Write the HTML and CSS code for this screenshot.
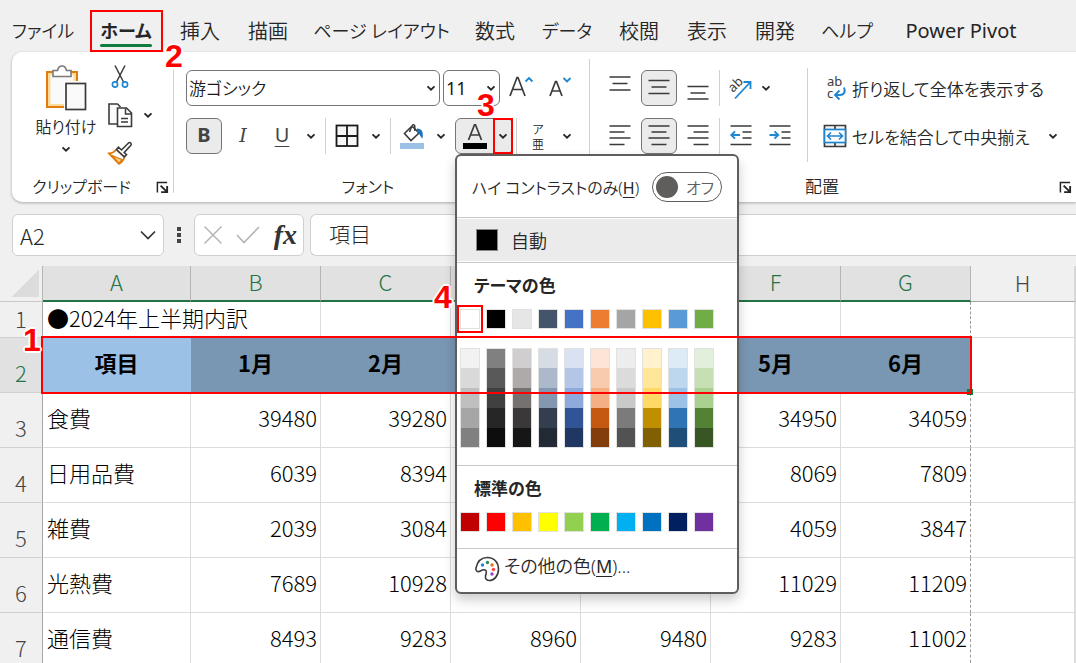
FILE: index.html
```html
<!DOCTYPE html>
<html lang="ja">
<head>
<meta charset="utf-8">
<meta name="viewport" content="width=device-width, initial-scale=1">
<title>2024年上半期内訳</title>
<link rel="stylesheet" href="styles.css">
</head>
<body>
<svg class="defs" aria-hidden="true">
  <symbol id="chev" viewBox="0 0 10 10"><path d="M1.5 3.3 5 6.7 8.5 3.3" fill="none" stroke="#262626" stroke-width="1.8"/></symbol>
  <symbol id="launch" viewBox="0 0 14 14"><path d="M1.5 12.5V1.5H12" fill="none" stroke="#262626" stroke-width="1.6"/><path d="M5 5l6 6M12 5.500v6.500H5.500" fill="none" stroke="#262626" stroke-width="2"/></symbol>
</svg>

<nav class="tabs" aria-label="リボン">
  <button class="kana">ファイル</button>
  <button class="kana active">ホーム</button>
  <button>挿入</button>
  <button>描画</button>
  <button class="kana">ページ レイアウト</button>
  <button>数式</button>
  <button class="kana">データ</button>
  <button>校閲</button>
  <button>表示</button>
  <button>開発</button>
  <button class="kana">ヘルプ</button>
  <button class="latin">Power Pivot</button>
</nav>

<div class="ribbon">
  <section class="group clipboard">
    <div class="group-body">
      <button class="paste">
        <svg width="42" height="46" viewBox="0 0 42 46" fill="none">
          <rect x="2" y="7" width="30" height="35" fill="#fbdc9b" stroke="#e07b0c" stroke-width="2"/>
          <rect x="5.500" y="10" width="23" height="29" fill="#fafafa"/>
          <path d="M8 11.500V5.500h4.500C13 2.500 15 1 17 1s4 1.500 4.500 4.500H26v6z" fill="#fff" stroke="#7a7a7a" stroke-width="1.6"/>
          <rect x="19" y="16" width="23" height="30" fill="#fff"/>
          <rect x="21" y="18.500" width="19.500" height="26" fill="#fafafa" stroke="#3b3b3b" stroke-width="1.7"/>
        </svg>
        <span>貼り付け</span>
        <svg class="chev"><use href="#chev"/></svg>
      </button>
      <div class="clip-tools">
        <button class="icon" aria-label="切り取り"><svg width="18" height="26" viewBox="0 0 18 26" fill="none"><path d="M4 1.500l8.500 16.500M14 1.500L5.500 18" stroke="#3b3b3b" stroke-width="1.5"/><circle cx="4" cy="20.500" r="2.600" stroke="#1f87d2" stroke-width="1.6"/><circle cx="14" cy="20.500" r="2.600" stroke="#1f87d2" stroke-width="1.6"/></svg></button>
        <button class="icon" aria-label="コピー"><svg width="26" height="26" viewBox="0 0 26 26" fill="none"><path d="M10 22H2V2h8.500l3 3" fill="#fafafa" stroke="#3b3b3b" stroke-width="1.6"/><path d="M10.500 6h9l5 5v13.500h-14z" fill="#fff" stroke="#3b3b3b" stroke-width="1.6"/><path d="M18.500 6.500V12h6M14 16.500h7M14 20h7" stroke="#3b3b3b" stroke-width="1.5"/></svg></button>
        <button class="icon" aria-label="書式のコピー"><svg width="26" height="26" viewBox="0 0 26 26" fill="none"><path d="M9.500 9.500C7 12.500 4.500 13.300 2 13.500l10 10.300c3-1.600 4.800-4 5.500-7z" fill="#fff" stroke="#e07b0c" stroke-width="1.8"/><path d="M5 15.500l10 4-3 4z" fill="#fbcf80" stroke="#e07b0c" stroke-width="1.300"/><path d="M9.500 9.500l2-2.300 3 2.800 7-7c1.800-1.300 3.500.5 2.400 2.200l-6.700 7.300 2.300 2.300-2.300 2z" fill="#fff" stroke="#3b3b3b" stroke-width="1.6"/></svg></button>
      </div>
      <button class="drop" aria-label="コピーのオプション"><svg class="chev"><use href="#chev"/></svg></button>
    </div>
    <footer><span>クリップボード</span><button class="launcher" aria-label="クリップボードの設定"><svg width="13" height="13"><use href="#launch"/></svg></button></footer>
  </section>
  <i class="rule"></i>

  <section class="group font">
    <div class="group-body rows">
      <div class="row">
        <label class="combo family"><select aria-label="フォント"><option>游ゴシック</option></select><svg class="chev"><use href="#chev"/></svg></label>
        <label class="combo size"><select aria-label="フォント サイズ"><option>11</option></select><svg class="chev"><use href="#chev"/></svg></label>
        <button class="tool" aria-label="フォント サイズの拡大"><svg width="26" height="26" viewBox="0 0 26 26" fill="none"><path d="M2 21L9 2.500h1L17 21M4.500 14.500h10" stroke="#3b3b3b" stroke-width="1.7"/><path d="M17.500 6.500L21 3l3.500 3.500" stroke="#1f87d2" stroke-width="1.8"/></svg></button>
        <button class="tool" aria-label="フォント サイズの縮小"><svg width="26" height="26" viewBox="0 0 26 26" fill="none"><path d="M3 21L8.500 6.500h1L15 21M5 16h8" stroke="#3b3b3b" stroke-width="1.7"/><path d="M16.500 3L20 6.500 23.500 3" stroke="#1f87d2" stroke-width="1.8"/></svg></button>
      </div>
      <div class="row">
        <button class="tool on bold">B</button>
        <button class="tool italic">I</button>
        <button class="tool under">U</button>
        <button class="drop" aria-label="下線の種類"><svg class="chev"><use href="#chev"/></svg></button>
        <i class="bar"></i>
        <button class="tool" aria-label="罫線"><svg width="24" height="24" viewBox="0 0 24 24" fill="none" stroke="#1a1a1a" stroke-width="1.800"><rect x="1.500" y="1.500" width="21" height="20.500" fill="#f7f7f7"/><path d="M12 2v20M2 12h20"/></svg></button>
        <button class="drop" aria-label="罫線の種類"><svg class="chev"><use href="#chev"/></svg></button>
        <i class="bar"></i>
        <button class="tool" aria-label="塗りつぶしの色"><svg width="26" height="26" viewBox="0 0 26 26" fill="none"><path d="M12 4L5.500 10.500 12 17.500l8-7.500-6-6z" fill="#fff" stroke="#3b3b3b" stroke-width="1.6"/><path d="M10.500 9L13 2.800c.6-1.600 2.800-1.200 2.800.5V8" stroke="#3b3b3b" stroke-width="1.5"/><path d="M18 5.500c5 0 6.500 3.500 5.500 10-2.500-1.500-2.500-5.500-5.500-6z" fill="#1770c0"/><rect x="1" y="20" width="24" height="6" fill="#9bc2e6"/></svg></button>
        <button class="drop" aria-label="塗りつぶしの色の選択"><svg class="chev"><use href="#chev"/></svg></button>
        <div class="split">
          <button aria-label="フォントの色"><svg width="26" height="26" viewBox="0 0 26 26" fill="none"><path d="M6.500 17L12.500 1.800h1L19.500 17M8.500 12h9" stroke="#3b3b3b" stroke-width="1.7"/><rect x="1" y="20" width="24" height="6" fill="#000"/></svg></button>
          <button class="marked" aria-label="フォントの色の選択"><svg class="chev"><use href="#chev"/></svg></button>
        </div>
        <i class="bar"></i>
        <button class="tool ruby"><span>ア</span><span>亜</span></button>
        <button class="drop" aria-label="ふりがなの設定"><svg class="chev"><use href="#chev"/></svg></button>
      </div>
    </div>
    <footer><span>フォント</span></footer>
  </section>
  <i class="rule tall"></i>

  <section class="group align">
    <div class="group-body">
      <div class="rows">
        <div class="row">
          <button class="tool" aria-label="上揃え"><svg class="lines" viewBox="0 0 24 24"><path d="M1.500 1h21M4.500 7.500h15M1.500 14h21"/></svg></button>
          <button class="tool on" aria-label="上下中央揃え"><svg class="lines" viewBox="0 0 24 24"><path d="M1.500 4.500h21M4.500 11h15M1.500 17.500h21"/></svg></button>
          <button class="tool" aria-label="下揃え"><svg class="lines" viewBox="0 0 24 24"><path d="M1.500 10.500h21M4.500 17h15M1.500 23h21"/></svg></button>
          <i class="bar"></i>
          <button class="tool slim" aria-label="方向"><svg width="26" height="26" viewBox="0 0 26 26" fill="none"><text class="glyph" transform="translate(7 18) rotate(-45)">ab</text><path d="M9 23.500L24 7.500M17.500 7h7v7" stroke="#1f87d2" stroke-width="1.800"/></svg></button>
          <button class="drop" aria-label="方向の選択"><svg class="chev"><use href="#chev"/></svg></button>
        </div>
        <div class="row">
          <button class="tool" aria-label="左揃え"><svg class="lines" viewBox="0 0 24 24"><path d="M1.500 2h21M1.500 8h15M1.500 14h21M1.500 20.500h15"/></svg></button>
          <button class="tool on" aria-label="中央揃え"><svg class="lines" viewBox="0 0 24 24"><path d="M1.500 2h21M4.500 8h15M1.500 14h21M4.500 20.500h15"/></svg></button>
          <button class="tool" aria-label="右揃え"><svg class="lines" viewBox="0 0 24 24"><path d="M1.500 2h21M7.500 8h15M1.500 14h21M7.500 20.500h15"/></svg></button>
          <i class="bar"></i>
          <button class="tool" aria-label="インデントを減らす"><svg class="lines" viewBox="0 0 24 24"><path d="M1.500 2h21M13.500 8h9M13.500 14h9M1.500 20.500h21"/><path class="blue" d="M11 11H2.500M6 7.300L2.300 11 6 14.700"/></svg></button>
          <button class="tool" aria-label="インデントを増やす"><svg class="lines" viewBox="0 0 24 24"><path d="M1.500 2h21M13.500 8h9M13.500 14h9M1.500 20.500h21"/><path class="blue" d="M1.500 11H10M6.500 7.300l3.700 3.700-3.700 3.700"/></svg></button>
        </div>
      </div>
      <i class="rule inner"></i>
      <div class="rows wide">
        <button class="row text-tool"><svg width="24" height="26" viewBox="0 0 24 26" fill="none"><text class="glyph" x="4" y="11">ab</text><text class="glyph" x="4" y="23">c</text><path d="M21 12.500c2 5-.5 7.500-4 7.500h-4.500M16.500 15.500L12 20l4.500 4.500" stroke="#1f87d2" stroke-width="1.900"/></svg><span>折り返して全体を表示する</span></button>
        <div class="row">
          <button class="text-tool"><svg width="24" height="24" viewBox="0 0 24 24" fill="none"><path d="M1.500 1.500h21v21h-21zM12 1v4M12 19v4" fill="#f4f4f4" stroke="#3b3b3b" stroke-width="1.700"/><rect x="1.500" y="5.500" width="21" height="13" fill="#fff" stroke="#1f87d2" stroke-width="1.700"/><path d="M4.500 12h15M8 8.500L4.500 12 8 15.500M16 8.500l3.500 3.500-3.500 3.500" stroke="#1f87d2" stroke-width="1.700"/></svg><span>セルを結合して中央揃え</span></button>
          <button class="drop" aria-label="結合の種類"><svg class="chev"><use href="#chev"/></svg></button>
        </div>
      </div>
    </div>
    <footer><span>配置</span><button class="launcher" aria-label="配置の設定"><svg width="13" height="13"><use href="#launch"/></svg></button></footer>
  </section>
</div>

<div class="formula-bar">
  <label class="name-box"><input type="text" value="A2" aria-label="名前ボックス"><svg width="16" height="10" viewBox="0 0 16 10" fill="none"><path d="M1 1.500l7 7 7-7" stroke="#333" stroke-width="1.700"/></svg></label>
  <svg class="dots" width="4" height="18" viewBox="0 0 4 18" fill="#444"><path d="M0 1h4v4H0zM0 7h4v4H0zM0 13h4v4H0z"/></svg>
  <div class="entry">
    <button aria-label="キャンセル"><svg width="20" height="20" viewBox="0 0 20 20"><path d="M1.500 1.500l17 17M18.500 1.500l-17 17" stroke="#b4b4b4" stroke-width="1.500"/></svg></button>
    <button aria-label="入力"><svg width="24" height="20" viewBox="0 0 24 20" fill="none"><path d="M1 10l7 7.500L23 2" stroke="#b4b4b4" stroke-width="1.600"/></svg></button>
    <button class="fx">fx</button>
  </div>
  <input class="formula" type="text" value="項目" aria-label="数式バー">
</div>

<main class="sheet">
  <table>
    <colgroup><col class="c-head"><col class="c-first"><col class="c-num" span="6"><col class="c-blank"><col></colgroup>
    <thead>
      <tr><th class="corner"></th><th>A</th><th>B</th><th>C</th><th></th><th></th><th>F</th><th>G</th><th class="plain">H</th><th class="plain"></th></tr>
    </thead>
    <tbody>
      <tr class="title"><th>1</th><td colspan="2">●2024年上半期内訳</td><td></td><td></td><td></td><td></td><td class="page-end"></td><td></td><td></td></tr>
      <tr class="heads"><th>2</th><td class="first">項目</td><td>1月</td><td>2月</td><td></td><td></td><td>5月</td><td>6月</td><td class="free"></td><td class="free"></td></tr>
      <tr><th>3</th><td>食費</td><td>39480</td><td>39280</td><td></td><td></td><td>34950</td><td class="page-end">34059</td><td></td><td></td></tr>
      <tr><th>4</th><td>日用品費</td><td>6039</td><td>8394</td><td></td><td></td><td>8069</td><td class="page-end">7809</td><td></td><td></td></tr>
      <tr><th>5</th><td>雑費</td><td>2039</td><td>3084</td><td></td><td></td><td>4059</td><td class="page-end">3847</td><td></td><td></td></tr>
      <tr><th>6</th><td>光熱費</td><td>7689</td><td>10928</td><td></td><td></td><td>11029</td><td class="page-end">11209</td><td></td><td></td></tr>
      <tr><th>7</th><td>通信費</td><td>8493</td><td>9283</td><td>8960</td><td>9480</td><td>9283</td><td class="page-end">11002</td><td></td><td></td></tr>
    </tbody>
  </table>
</main>

<div class="color-menu">
  <label class="contrast"><span>ハイ コントラストのみ(<u>H</u>)</span><span class="switch"><input type="checkbox" role="switch"><span>オフ</span></span></label>
  <button class="auto"><i></i>自動</button>
  <section class="theme">
    <h2>テーマの色</h2>
    <div class="swatches" id="theme"></div>
    <div class="shades" id="shades"></div>
  </section>
  <section class="standard">
    <h2>標準の色</h2>
    <div class="swatches" id="standard"></div>
  </section>
  <button class="more"><svg width="26" height="26" viewBox="0 0 26 26" fill="none"><path d="M2 12C3.500 5 8 1.500 13.500 1.500 20 1.500 24.500 6.500 24.500 13c0 7-4.500 11.500-9 11.500-3 0-4.500-2-4-4.500.6-2.700 1.700-4.500.3-5.700-1.500-1.200-3.300-.5-5.500.7C3.500 16.500 1.300 15 2 12z" fill="#fff" stroke="#3b3b3b" stroke-width="1.600"/><circle cx="8.500" cy="9" r="1.700" fill="#1f87d2"/><circle cx="13.500" cy="6.500" r="1.700" fill="#2e8b57"/><circle cx="18" cy="9" r="1.700" fill="#e8730c"/><circle cx="19.500" cy="13.500" r="1.700" fill="#f44"/><circle cx="18" cy="18" r="1.700" fill="#a23fc4"/></svg><span>その他の色(<u>M</u>)...</span></button>
</div>

<div class="marks">
  <i class="frame frame-tab"></i><b class="num num-tab">2</b>
  <b class="num num-drop">3</b>
  <i class="frame frame-swatch"></i><b class="num num-swatch">4</b>
  <i class="handle"></i><i class="frame frame-row"></i><b class="num num-row">1</b>
</div>
<script src="script.js"></script>
</body>
</html>
```
FILE: styles.css
```css
* { box-sizing: border-box; }

body {
  position: relative;
  margin: 0;
  height: 100vh;
  overflow: hidden;
  background: #f0f0f0;
  color: #262626;
  font-family: "Noto Sans", "Noto Sans CJK JP", sans-serif;
  font-size: 17px;
  font-weight: 350;
  font-feature-settings: "palt";
}

button, input, select {
  margin: 0;
  padding: 0;
  border: 0;
  background: none;
  color: inherit;
  font: inherit;
  font-feature-settings: inherit;
}

svg { display: block; flex: none; overflow: visible; }
.defs { position: absolute; width: 0; height: 0; }
.chev { width: 10px; height: 10px; }
.glyph { fill: #3b3b3b; font: 400 13px/13px "Noto Sans", sans-serif; }

/* Ribbon tabs */
.tabs {
  display: grid;
  grid-template-columns: 58px 52px 40px 40px 131px 40px 48px 40px 40px 40px 48px 124px;
  column-gap: 28px;
  height: 52px;
  padding: 8px 0 0 14px;
  font-size: 20px;
}
.tabs button { white-space: nowrap; display: flex; align-items: center; justify-content: center; }
.tabs .kana { font-size: 18px; }
.tabs .latin { font-size: 20px; font-weight: 400; }
.tabs .active { position: relative; font-weight: 700; }
.tabs .active::after {
  content: "";
  position: absolute;
  left: 0;
  right: 0;
  bottom: 5px;
  height: 3px;
  border-radius: 2px;
  background: #107c41;
}

/* Ribbon */
.ribbon {
  display: flex;
  margin-left: 12px;
  border-radius: 10px 0 0 10px;
  background: #fff;
  box-shadow: 0 1px 3px rgba(0, 0, 0, .3);
}
.group { display: flex; flex-direction: column; }
.group-body { display: flex; height: 120px; padding-top: 6px; }
.group footer { display: flex; align-items: center; height: 30px; font-size: 16px; }
.group footer span { flex: 1; text-align: center; line-height: 20px; }
.launcher { display: grid; place-items: center; width: 22px; height: 22px; }
.clipboard { width: 161px; }
.font { width: 415px; }
.font footer { padding-right: 27px; }
.align { flex: 1; }
.align footer { font-size: 17px; }

.rule { width: 1px; margin: 18px 0 9px; background: #d0d0d0; }
.rule.tall { margin-top: 7px; }
.rule.inner { margin: 10px 0 10px 9px; }
.bar { width: 1px; height: 36px; margin-left: 3px; background: #d0d0d0; }
.align .bar { margin-left: 0; }

.paste {
  display: flex;
  flex-direction: column;
  align-items: center;
  width: 76px;
  margin-left: 16px;
  padding-top: 7px;
  font-size: 16px;
}
.paste span { line-height: 33px; white-space: nowrap; }
.clip-tools { display: grid; grid-template-rows: repeat(3, 38px); width: 28px; margin: 0 6px 0 2px; }
.icon { display: grid; place-items: center; }
.clipboard .drop { height: 114px; }

.rows { display: flex; flex-direction: column; gap: 12px; padding: 18px 0 0 12px; }
.align .rows { padding-top: 12px; }
.align .wide { flex: 1; padding-left: 15px; }
.row { display: flex; align-items: center; gap: 3px; height: 36px; }
.tool { display: grid; place-items: center; width: 36px; height: 36px; border-radius: 6px; }
.tool.slim { width: 32px; }
.tool.on { border: 1px solid #757575; background: #ebebeb; }
.bold, .italic, .under { color: #444; line-height: 24px; padding-bottom: 3px; }
.bold { font-weight: 700; font-size: 20px; }
.italic { font-family: "DejaVu Serif", serif; font-style: italic; font-size: 19px; }
.under { font-size: 20px; font-weight: 400; text-decoration: underline; text-underline-offset: 4px; text-decoration-thickness: 1px; }
.drop { display: grid; place-items: center; width: 16px; height: 36px; }
.lines { width: 24px; height: 24px; fill: none; stroke: #3b3b3b; stroke-width: 1.7; }
.lines .blue { stroke: #1f87d2; stroke-width: 1.9; }

.combo {
  position: relative;
  display: flex;
  align-items: center;
  height: 36px;
  border: 1px solid #757575;
  border-radius: 6px;
}
.combo select { width: 100%; height: 100%; padding-left: 2px; appearance: none; color: #1a1a1a; }
.combo .chev { position: absolute; right: 3px; pointer-events: none; }
.family { width: 254px; }
.size { width: 57px; font-size: 18px; font-weight: 400; }

.split {
  display: flex;
  width: 58px;
  height: 36px;
  margin-left: 3px;
  border: 1px solid #757575;
  border-radius: 6px;
  background: #ebebeb;
}
.split button { display: grid; place-items: center; flex: 1; }
.split .marked { flex: none; width: 20px; margin: -1px; border: 2px solid #f00; }
.font .split + .bar { margin-left: 0; }
.ruby { width: 36px; align-content: center; font-family: "Noto Sans CJK JP", sans-serif; font-size: 12px; }
.ruby span { height: 15px; line-height: 15px; }

.text-tool { display: flex; align-items: center; gap: 5px; white-space: nowrap; }
.wide .drop { margin-left: 12px; }

/* Formula bar */
.formula-bar { display: flex; align-items: center; height: 64px; padding: 2px 0 0 12px; }
.name-box, .entry, .formula {
  height: 42px;
  border: 1px solid #d0d0d0;
  border-radius: 6px;
  background: #fff;
}
.name-box { display: flex; align-items: center; width: 152px; padding: 0 7px; font-family: "Noto Sans CJK JP", sans-serif; font-size: 22px; font-weight: 300; }
.name-box input { width: 100%; min-width: 0; }
.dots { margin: 0 13px; }
.entry { display: flex; align-items: center; justify-content: space-between; width: 110px; padding: 0 6px 0 8px; }
.fx { color: #333; font-family: "Liberation Serif", serif; font-size: 28px; font-style: italic; font-weight: 700; line-height: 28px; }
.formula {
  flex: 1;
  min-width: 0;
  margin-left: 6px;
  padding: 0 18px 4px;
  border-right: 0;
  border-radius: 6px 0 0 6px;
  font-family: "Noto Sans CJK JP", sans-serif;
  font-size: 21px;
  font-weight: 300;
  font-feature-settings: normal;
}

/* Worksheet */
.sheet { font-family: "Noto Sans CJK JP", sans-serif; font-size: 22px; font-weight: 300; font-feature-settings: normal; }
.sheet table { width: 100%; table-layout: fixed; border-collapse: separate; border-spacing: 0; line-height: 28px; }
.c-head { width: 43px; }
.c-first { width: 148px; }
.c-num { width: 130px; }
.c-blank { width: 104px; }
.sheet th { padding: 0; font-weight: 300; color: #444; }
.sheet thead th {
  height: 36px;
  padding-bottom: 4px;
  border-right: 1px solid #b5b5b5;
  border-bottom: 2px solid #217346;
  background: #e1e1e1;
  color: #217346;
}
.sheet thead .plain { border-bottom: 1px solid #a6a6a6; background: #f0f0f0; color: #444; border-right-color: #d8d8d8; }
.sheet thead .corner {
  border-bottom: 1px solid #c8c8c8;
  background: linear-gradient(135deg, transparent 50%, #dcdcdc 50%) 12px 4px / 27px 27px no-repeat #f0f0f0;
}
.sheet tbody th {
  height: 55px;
  padding-bottom: 6px;
  border-right: 1px solid #a6a6a6;
  border-bottom: 1px solid #d0d0d0;
  background: #f0f0f0;
  vertical-align: bottom;
}
.sheet td {
  height: 55px;
  padding: 0 3px 6px 0;
  border-right: 1px solid #dcdcdc;
  border-bottom: 1px solid #dcdcdc;
  background: #fff;
  color: #000;
  text-align: right;
  white-space: nowrap;
}
.sheet td:nth-child(2) { padding-left: 4px; text-align: left; }
.sheet .title th, .sheet .title td { height: 36px; padding-bottom: 5px; }
.sheet .page-end { border-right: 1px dashed #9a9a9a; }
.sheet .heads th { background: #e1e1e1; color: #217346; }
.sheet .heads td { padding: 0 1px 6px; border-color: #7996b3; background: #7996b3; font-weight: 700; text-align: center; }
.sheet .heads .first { border-color: #9bc2e6; background: #9bc2e6; }
.sheet .heads .free { border-color: #dcdcdc; background: #fff; }

/* Font colour menu */
.color-menu {
  position: absolute;
  left: 455px;
  top: 154px;
  width: 284px;
  border: 2px solid #605e5c;
  border-radius: 6px;
  background: #fff;
  box-shadow: 0 6px 12px rgba(0, 0, 0, .2);
}
.contrast { display: flex; align-items: center; justify-content: space-between; height: 62px; padding: 0 15px; border-bottom: 1px solid #c8c8c8; font-size: 16px; white-space: nowrap; }
.color-menu u { text-underline-offset: 3px; }
.switch { display: flex; align-items: center; gap: 8px; width: 70px; height: 30px; padding: 0 3px; border: 1px solid #605e5c; border-radius: 15px; color: #605e5c; }
.switch input { appearance: none; width: 22px; height: 22px; border-radius: 50%; background: #605e5c; }
.auto { display: flex; align-items: center; gap: 13px; width: 100%; height: 44px; padding-left: 19px; border: solid #fff; border-width: 1px 0; background: #ebebeb; font-size: 18px; }
.auto i { width: 22px; height: 22px; border: 1px solid #888; background: #000; }
.theme { border-top: 1px solid #c8c8c8; border-bottom: 1px solid #c8c8c8; height: 204px; padding: 8px 0 0 3px; }
.color-menu h2 { margin: 0 0 8px 14px; font-size: 17px; line-height: 30px; font-weight: 700; }
.swatches, .shades { display: grid; grid-template-columns: repeat(10, 20px); column-gap: 6px; }
.swatches button { height: 20px; border: 1px solid #e1e1e1; }
.shades { grid-template-rows: repeat(5, 20px); grid-auto-flow: column; margin-top: 19px; }
.shades button { border: solid #e1e1e1; border-width: 0 1px; }
.shades button:nth-child(5n + 1) { border-top-width: 1px; }
.shades button:nth-child(5n) { border-bottom-width: 1px; }
.standard { height: 83px; padding: 8px 0 0 3px; border-bottom: 1px solid #c8c8c8; }
.more { display: flex; align-items: flex-start; gap: 4px; width: 100%; height: 43px; padding: 7px 0 0 17px; font-size: 18px; }
.more span { line-height: 20px; }
.contrast u, .more u { font-weight: 400; }

/* Step marks */
.marks { position: absolute; inset: 0; pointer-events: none; }
.frame { position: absolute; border: 2px solid #f00; }
.num {
  position: absolute;
  color: #f00;
  font: 700 32px/32px "Liberation Sans", sans-serif;
  text-shadow: 2px 0 #fff, -2px 0 #fff, 0 2px #fff, 0 -2px #fff, 1px 1px #fff, -1px -1px #fff, 1px -1px #fff, -1px 1px #fff;
}
.frame-tab { left: 90px; top: 10px; width: 73px; height: 42px; }
.num-tab { left: 165px; top: 40px; }
.num-drop { left: 477px; top: 89px; }
.frame-swatch { left: 457px; top: 305px; width: 26px; height: 28px; }
.num-swatch { left: 434px; top: 281px; }
.frame-row { left: 41px; top: 336px; width: 931px; height: 58px; }
.num-row { left: 23px; top: 324px; }
.handle { position: absolute; left: 967px; top: 389px; width: 6px; height: 6px; background: #107c41; }
```
FILE: script.js
```js
const palette = {
  theme: ["#ffffff", "#000000", "#e7e6e6", "#44546a", "#4472c4", "#ed7d31", "#a5a5a5", "#ffc000", "#5b9bd5", "#70ad47"],
  shades: [
    "#f2f2f2", "#d9d9d9", "#bfbfbf", "#a6a6a6", "#808080",
    "#808080", "#595959", "#404040", "#262626", "#0d0d0d",
    "#d0cece", "#aeaaaa", "#757171", "#3a3838", "#161616",
    "#d6dce4", "#acb9ca", "#8497b0", "#333f4f", "#222b35",
    "#d9e1f2", "#b4c6e7", "#8ea9db", "#305496", "#203764",
    "#fce4d6", "#f8cbad", "#f4b084", "#c65911", "#833c0c",
    "#ededed", "#dbdbdb", "#c9c9c9", "#7b7b7b", "#525252",
    "#fff2cc", "#ffe699", "#ffd966", "#bf8f00", "#806000",
    "#ddebf7", "#bdd7ee", "#9bc2e6", "#2f75b5", "#1f4e78",
    "#e2efda", "#c6e0b4", "#a9d08e", "#548235", "#375623"
  ],
  standard: ["#c00000", "#ff0000", "#ffc000", "#ffff00", "#92d050", "#00b050", "#00b0f0", "#0070c0", "#002060", "#7030a0"]
};

for (const [id, colors] of Object.entries(palette)) {
  const grid = document.getElementById(id);
  for (const color of colors) {
    const button = document.createElement("button");
    button.style.backgroundColor = color;
    button.setAttribute("aria-label", color);
    grid.append(button);
  }
}
```
